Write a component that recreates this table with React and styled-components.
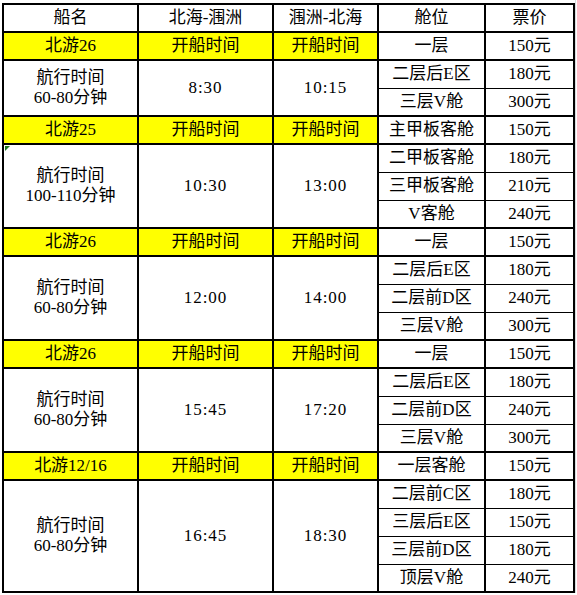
import React from "react";
import styled, { createGlobalStyle, css } from "styled-components";

const GlobalStyle = createGlobalStyle`
  html, body {
    margin: 0;
    padding: 0;
    background: #ffffff;
  }
  body {
    font-family: "Liberation Serif", "Noto Sans CJK SC", serif;
    color: #000000;
    background-image: linear-gradient(
      to right,
      transparent 575px,
      #d9dbde 575px,
      #d9dbde 576px,
      transparent 576px
    );
  }
`;

const Sheet = styled.div`
  padding: 3px 0 0 2px;
`;

const Table = styled.table`
  border-collapse: collapse;
  table-layout: fixed;
  width: 571px;
  font-size: 17px;
  line-height: 20px;
`;

const Col = styled.col`
  width: ${(p) => p.$w}px;
`;

const Row = styled.tr`
  height: 28px;
`;

const Cell = styled.td`
  position: relative;
  padding: 0;
  text-align: center;
  vertical-align: middle;
  white-space: nowrap;
  border: 2px solid #000;
  background: ${(p) => (p.$yellow ? "#ffff00" : "#ffffff")};
  ${(p) =>
    p.$thinTop &&
    css`
      border-top-width: 1px;
    `}
  ${(p) =>
    p.$thinBottom &&
    css`
      border-bottom-width: 1px;
    `}
  ${(p) =>
    p.$flag &&
    css`
      &::before {
        content: "";
        position: absolute;
        left: 1px;
        top: 1px;
        border-top: 5px solid #1e7a1e;
        border-right: 5px solid transparent;
      }
    `}
`;

const Line = styled.span`
  display: block;
`;

const blocks = [
  {
    ship: "北游26",
    first: ["一层", "150元"],
    duration: "60-80分钟",
    depart: "8:30",
    back: "10:15",
    cabins: [
      ["二层后E区", "180元"],
      ["三层V舱", "300元"],
    ],
  },
  {
    ship: "北游25",
    first: ["主甲板客舱", "150元"],
    duration: "100-110分钟",
    depart: "10:30",
    back: "13:00",
    flag: true,
    cabins: [
      ["二甲板客舱", "180元"],
      ["三甲板客舱", "210元"],
      ["V客舱", "240元"],
    ],
  },
  {
    ship: "北游26",
    first: ["一层", "150元"],
    duration: "60-80分钟",
    depart: "12:00",
    back: "14:00",
    cabins: [
      ["二层后E区", "180元"],
      ["二层前D区", "240元"],
      ["三层V舱", "300元"],
    ],
  },
  {
    ship: "北游26",
    first: ["一层", "150元"],
    duration: "60-80分钟",
    depart: "15:45",
    back: "17:20",
    cabins: [
      ["二层后E区", "180元"],
      ["二层前D区", "240元"],
      ["三层V舱", "300元"],
    ],
  },
  {
    ship: "北游12/16",
    first: ["一层客舱", "150元"],
    duration: "60-80分钟",
    depart: "16:45",
    back: "18:30",
    cabins: [
      ["二层前C区", "180元"],
      ["三层后E区", "150元"],
      ["三层前D区", "180元"],
      ["顶层V舱", "240元"],
    ],
  },
];

const Time = styled.span`
  letter-spacing: 1px;
`;

function Block({ b }) {
  const n = b.cabins.length;
  return (
    <>
      <Row>
        <Cell $yellow>{b.ship}</Cell>
        <Cell $yellow>开船时间</Cell>
        <Cell $yellow>开船时间</Cell>
        <Cell>{b.first[0]}</Cell>
        <Cell>{b.first[1]}</Cell>
      </Row>
      {b.cabins.map((c, i) => (
        <Row key={i}>
          {i === 0 && (
            <>
              <Cell rowSpan={n} $flag={b.flag}>
                <Line>航行时间</Line>
                <Line>{b.duration}</Line>
              </Cell>
              <Cell rowSpan={n}>
                <Time>{b.depart}</Time>
              </Cell>
              <Cell rowSpan={n}>
                <Time>{b.back}</Time>
              </Cell>
            </>
          )}
          <Cell $thinTop={i > 0} $thinBottom={i < n - 1}>
            {c[0]}
          </Cell>
          <Cell $thinTop={i > 0} $thinBottom={i < n - 1}>
            {c[1]}
          </Cell>
        </Row>
      ))}
    </>
  );
}

export default function App() {
  return (
    <Sheet>
      <GlobalStyle />
      <Table>
        <colgroup>
          <Col $w={135} />
          <Col $w={135} />
          <Col $w={105} />
          <Col $w={107} />
          <Col $w={89} />
        </colgroup>
        <tbody>
          <Row>
            <Cell>船名</Cell>
            <Cell>北海-涠洲</Cell>
            <Cell>涠洲-北海</Cell>
            <Cell>舱位</Cell>
            <Cell>票价</Cell>
          </Row>
          {blocks.map((b, i) => (
            <Block key={i} b={b} />
          ))}
        </tbody>
      </Table>
    </Sheet>
  );
}
